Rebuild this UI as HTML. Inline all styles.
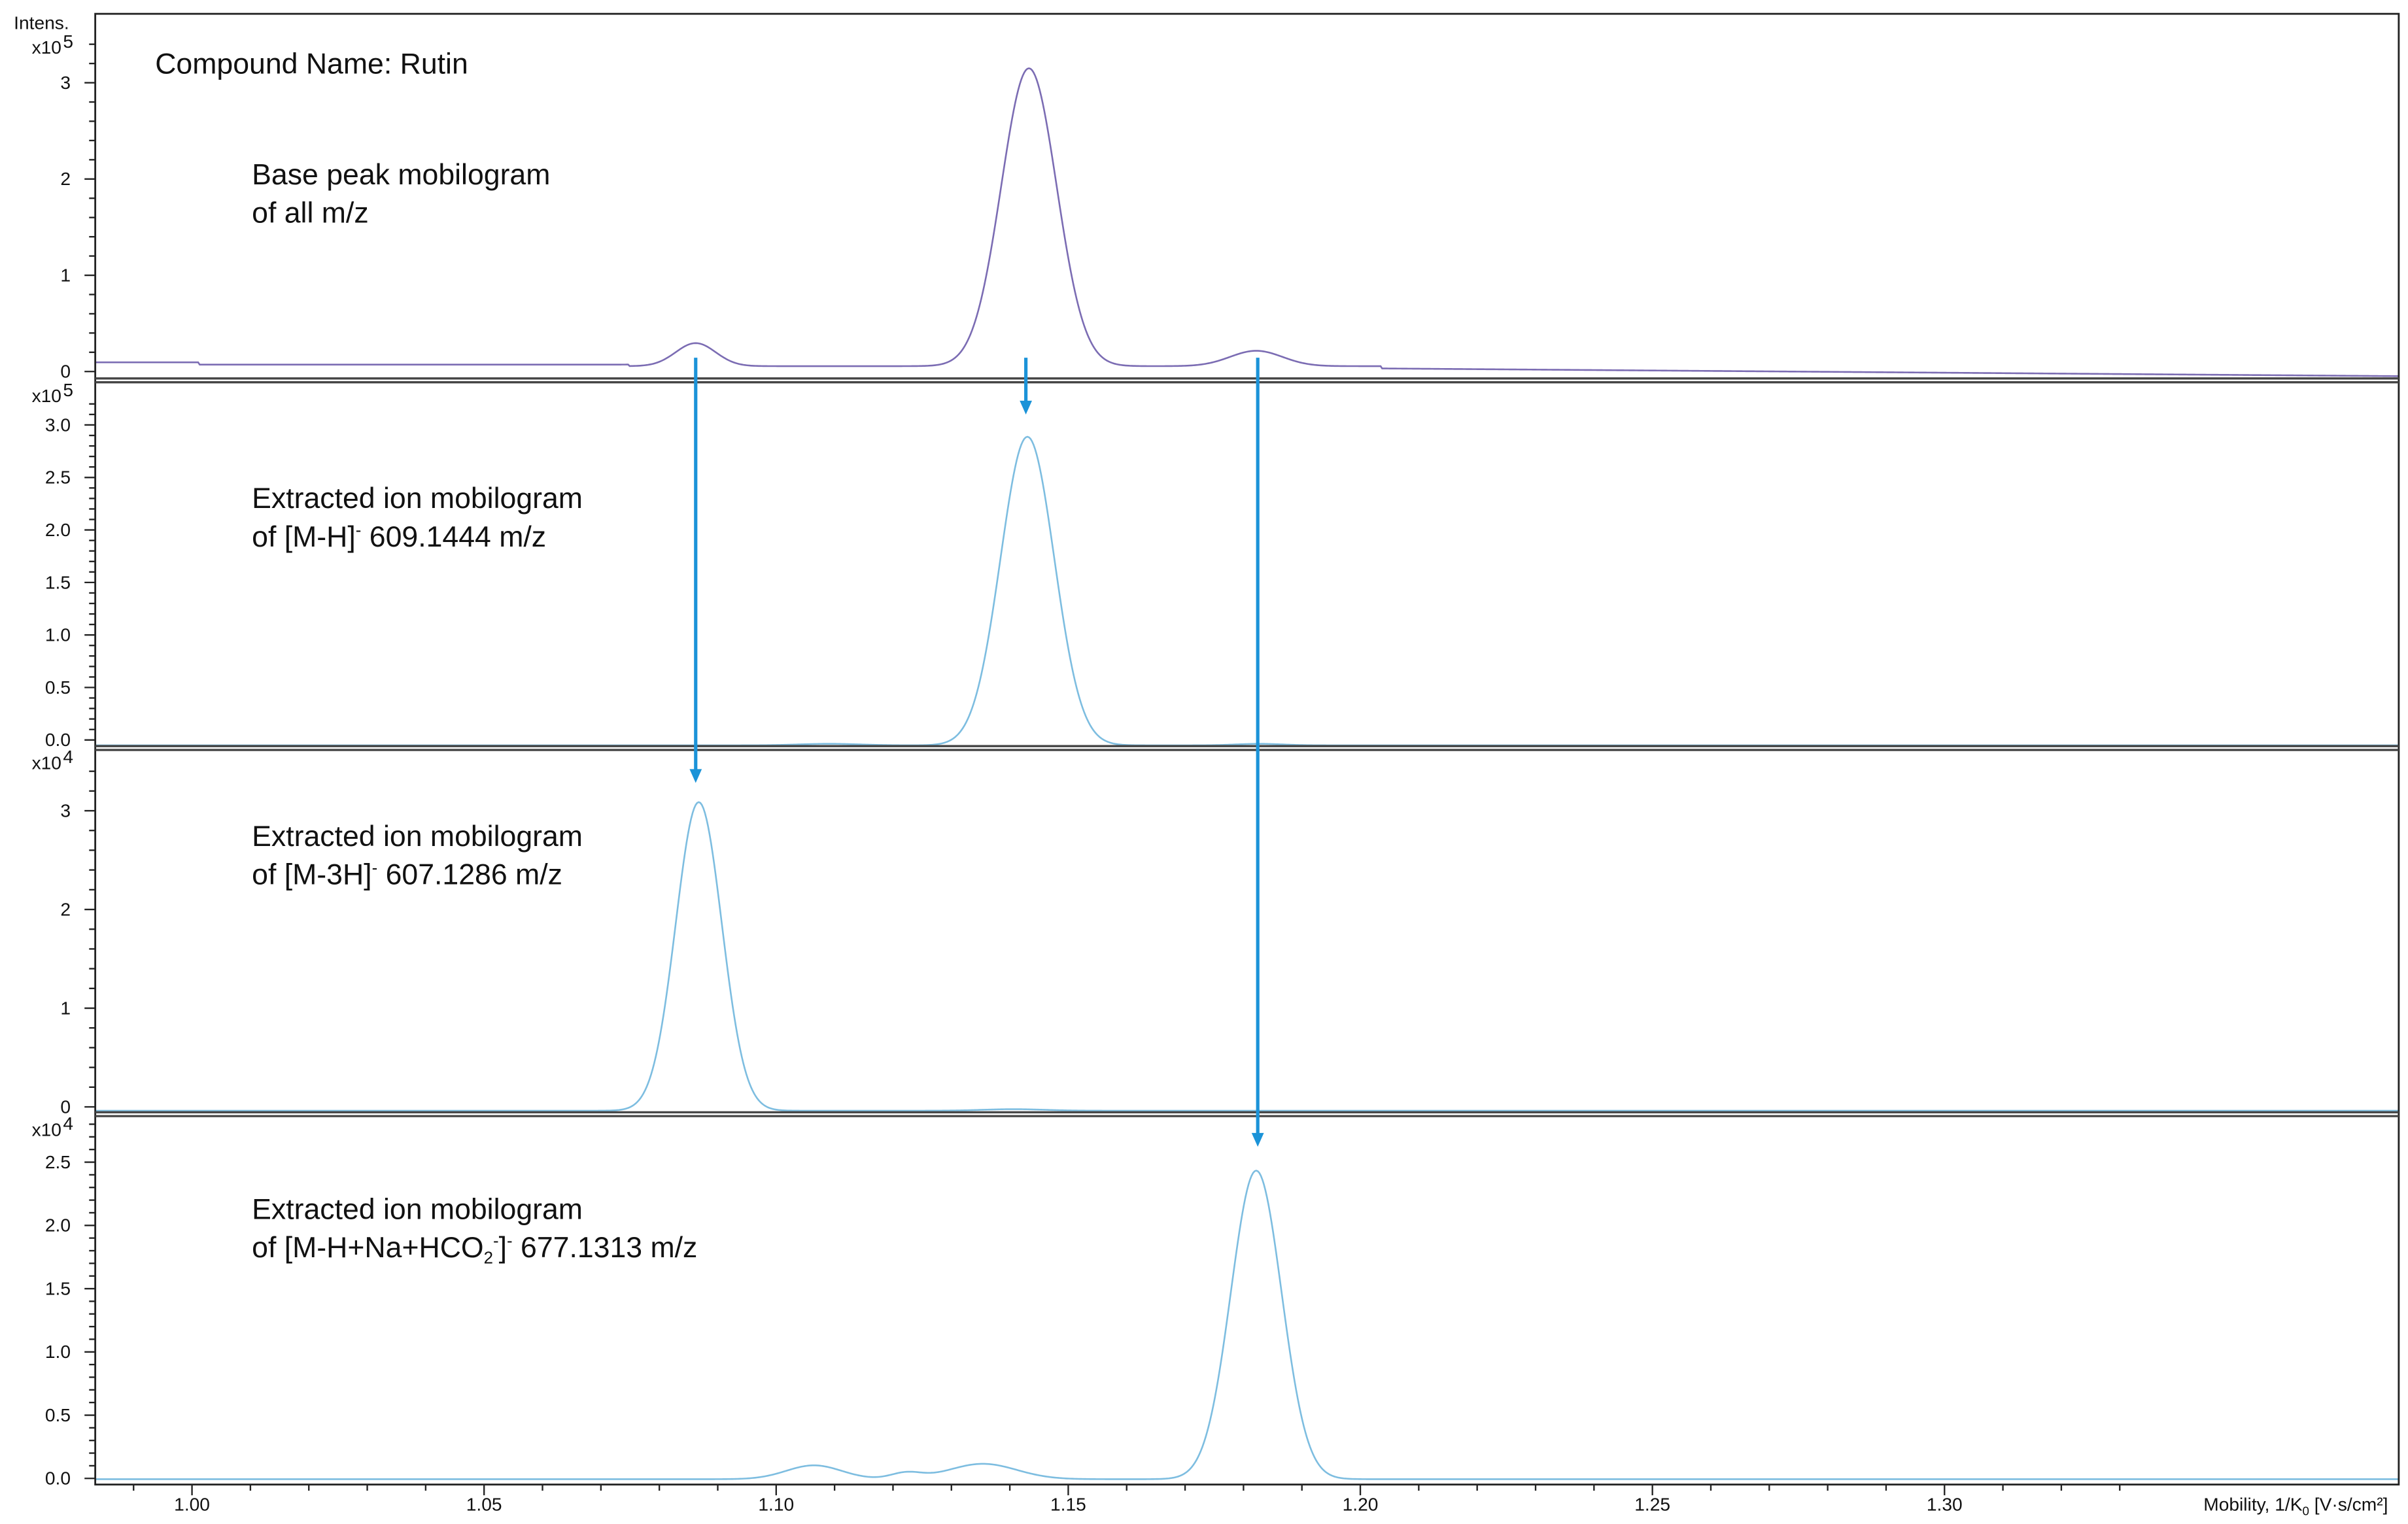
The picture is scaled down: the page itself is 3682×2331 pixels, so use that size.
<!DOCTYPE html>
<html><head><meta charset="utf-8"><style>
html,body{margin:0;padding:0;background:#fff;}
svg{display:block;}
text{font-family:"Liberation Sans",sans-serif;}
.ax{font-size:12px;fill:#111;}
.lb{font-size:19px;fill:#111;}
</style></head><body>
<svg id="s" width="3682" height="2331" viewBox="0 0 1568 992.7" xmlns="http://www.w3.org/2000/svg">
<rect x="0" y="0" width="1568" height="993" fill="#fff"/>
<g id="ticks" stroke="#222" stroke-width="1"></g>
<g id="curves" fill="none" stroke-width="1.1"></g>
<rect x="62" y="9" width="1500" height="958" fill="none" stroke="#222" stroke-width="1.2"/>
<g stroke="#444" stroke-width="1.4"><line x1="62" y1="246.5" x2="1562" y2="246.5"/><line x1="62" y1="249" x2="1562" y2="249"/>
<line x1="62" y1="486" x2="1562" y2="486"/><line x1="62" y1="488.5" x2="1562" y2="488.5"/>
<line x1="62" y1="724.5" x2="1562" y2="724.5"/><line x1="62" y1="727" x2="1562" y2="727"/></g>
<g stroke="#1b93d8" stroke-width="2.2" fill="#1b93d8">
<line x1="453" y1="233" x2="453" y2="502"/><polygon stroke="none" points="449,501 457,501 453,510"/>
<line x1="668" y1="233" x2="668" y2="262"/><polygon stroke="none" points="664,261 672,261 668,270"/>
<line x1="819" y1="233" x2="819" y2="739"/><polygon stroke="none" points="815,738 823,738 819,747"/>
</g>
<g id="ylab" class="ax" text-anchor="end"></g>
<text class="ax" x="45" y="19" text-anchor="end" font-size="11">Intens.</text>
<text class="ax" x="40" y="35" text-anchor="end" font-size="11">x10</text><text class="ax" x="41" y="31" font-size="9">5</text>
<text class="ax" x="40" y="262" text-anchor="end" font-size="11">x10</text><text class="ax" x="41" y="258" font-size="9">5</text>
<text class="ax" x="40" y="501" text-anchor="end" font-size="11">x10</text><text class="ax" x="41" y="497" font-size="9">4</text>
<text class="ax" x="40" y="740" text-anchor="end" font-size="11">x10</text><text class="ax" x="41" y="736" font-size="9">4</text>
<g id="xlab" class="ax" text-anchor="middle"></g>
<text class="ax" x="1555" y="984" text-anchor="end" font-size="11.5">Mobility,  1/K<tspan font-size="8" dy="3">0</tspan><tspan dy="-3"> [V·s/cm²]</tspan></text>
<g class="lb">
<text x="101" y="48">Compound Name: Rutin</text>
<text x="164" y="120">Base peak mobilogram</text>
<text x="164" y="145">of all m/z</text>
<text x="164" y="331">Extracted ion mobilogram</text>
<text x="164" y="356">of [M-H]<tspan font-size="11" dy="-7">-</tspan><tspan dy="7"> 609.1444 m/z</tspan></text>
<text x="164" y="551">Extracted ion mobilogram</text>
<text x="164" y="576">of [M-3H]<tspan font-size="11" dy="-7">-</tspan><tspan dy="7"> 607.1286 m/z</tspan></text>
<text x="164" y="794">Extracted ion mobilogram</text>
<text x="164" y="819">of [M-H+Na+HCO<tspan font-size="11" dy="4">2</tspan><tspan font-size="11" dy="-11">-</tspan><tspan dy="7">]</tspan><tspan font-size="11" dy="-7">-</tspan><tspan dy="7"> 677.1313 m/z</tspan></text>
</g>
</svg>
<script>
var NS="http://www.w3.org/2000/svg";
function el(p,t,a,txt){var e=document.createElementNS(NS,t);for(var k in a)e.setAttribute(k,a[k]);if(txt!==undefined)e.textContent=txt;document.getElementById(p).appendChild(e);return e;}
var panels=[
 {z:242,unit:62.7,max:3.4,minor:0.2,major:1,fmt:0,top:12},
 {z:482,unit:68.4,max:3.2,minor:0.1,major:0.5,fmt:1,top:252},
 {z:721,unit:64.3,max:3.4,minor:0.2,major:1,fmt:0,top:491},
 {z:963,unit:82.4,max:2.8,minor:0.1,major:0.5,fmt:1,top:730}];
panels.forEach(function(p){
 var n=Math.round(p.max/p.minor);
 for(var i=0;i<=n;i++){var v=i*p.minor;var y=p.z-v*p.unit;if(y<p.top)break;
  var maj=Math.abs(v/p.major-Math.round(v/p.major))<1e-6;
  el("ticks","line",{x1:maj?55:58,x2:62,y1:y,y2:y});
  if(maj){el("ylab","text",{x:46,y:y+4},p.fmt?v.toFixed(1):String(Math.round(v)));}
 }
});
for(var i=-2;i<=33;i++){var x=125+i*38.04;if(x<62||x>1562)continue;var maj=(i%5==0);
 el("ticks","line",{x1:x,x2:x,y1:967,y2:maj?974:971});
 if(maj)el("xlab","text",{x:x,y:984},(1+i*0.01).toFixed(2));}
function g(x,c){return c[1]*Math.exp(-Math.pow((x-c[0])/c[2],2)/2);}
function curve(base,comps,color){
 var d="";for(var x=62;x<=1562;x+=1){var y=base(x);comps.forEach(function(c){y-=g(x,c);});
  d+=(x==62?"M":"L")+x+","+y.toFixed(2);}
 el("curves","path",{d:d,stroke:color});
}
curve(function(x){return x<130?236:(x<410?237.5:(x<900?238.5:240+5*(x-900)/660));},
 [[453,15,13],[670,194,18],[818,10,17]],"#7b6cb3");
curve(function(x){return 485.5;},[[669,201,17.5],[540,1,20],[820,1,15]],"#7dbde0");
curve(function(x){return 723.5;},[[455,201,15],[660,1,20]],"#7dbde0");
curve(function(x){return 963.5;},[[818,201,16.5],[530,9,18],[640,10,22],[590,4,10]],"#7dbde0");
</script>
</body></html>
